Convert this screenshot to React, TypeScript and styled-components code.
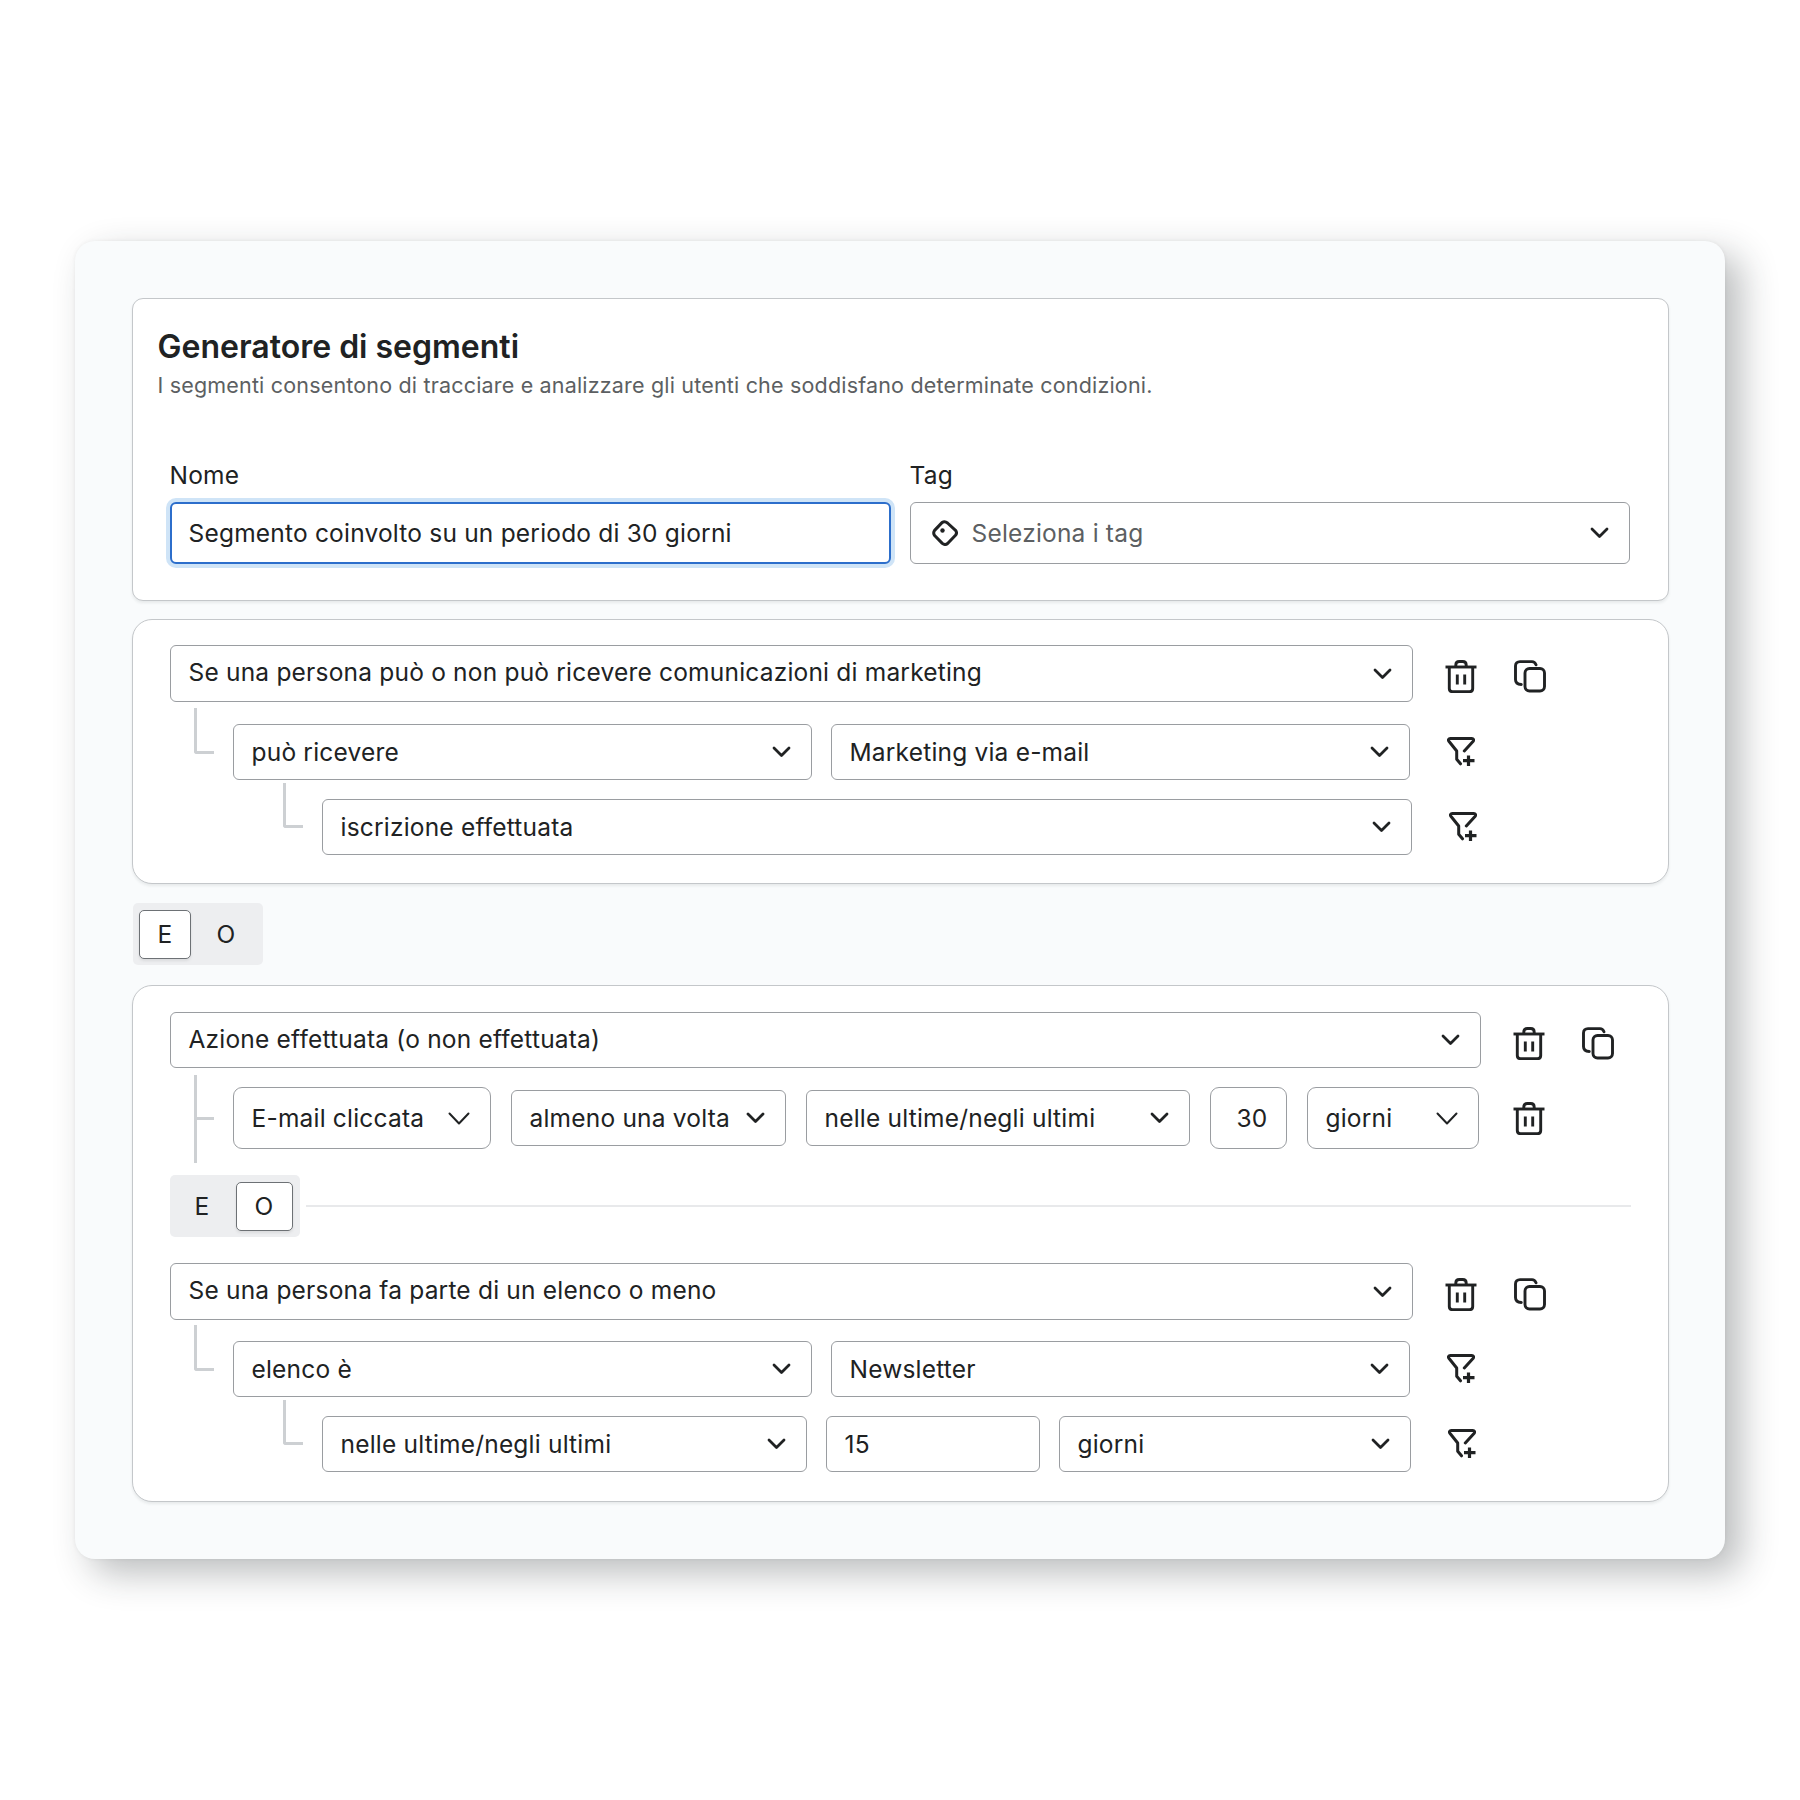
import React from "react";
import styled, { createGlobalStyle } from "styled-components";

const Global = createGlobalStyle`
  html, body { margin: 0; padding: 0; background: #fff; }
  body { font-family: Inter, "Noto Sans", sans-serif; color: #202223; letter-spacing: 0.2px; }
  * { box-sizing: border-box; }
`;

const Page = styled.main`
  width: 1800px;
  height: 1800px;
  padding: 241px 75px 0;
  background: #fff;
`;

const Shell = styled.div`
  width: 1650px;
  height: 1318px;
  padding: 57px 56.5px;
  background: #f9fbfc;
  border-radius: 20px;
  display: flex;
  flex-direction: column;
  box-shadow: 16px 14px 36px rgba(30, 35, 40, 0.3), 0 0 4px rgba(30, 35, 40, 0.06);
`;

const Card = styled.section<{ $h: number; $r?: number; $pt?: number; $mt?: number }>`
  height: ${(p) => p.$h}px;
  margin-top: ${(p) => p.$mt ?? 0}px;
  flex-shrink: 0;
  background: #fff;
  border: 1.5px solid #c4c7ca;
  border-radius: ${(p) => p.$r ?? 20}px;
  box-shadow: 0 2px 3px rgba(30, 35, 40, 0.08);
  padding: ${(p) => p.$pt ?? 25}px 37px 0;
  display: flex;
  flex-direction: column;
`;

const Header = styled.header`
  margin: 0 0 0 -12px;
`;

const Title = styled.h1`
  margin: 0;
  font-size: 32px;
  line-height: 36px;
  font-weight: 600;
  letter-spacing: 0;
  color: #202223;
`;

const Subtitle = styled.p`
  margin: 5px 0 0;
  font-size: 21.5px;
  line-height: 30px;
  letter-spacing: 0.18px;
  color: #5c5f62;
`;

const Fields = styled.div`
  margin-top: 60px;
  display: grid;
  grid-template-columns: 721px 720px;
  gap: 0 19px;
`;

const Field = styled.div`
  display: flex;
  flex-direction: column;
`;

const Label = styled.label`
  font-size: 24.5px;
  line-height: 30px;
  margin-bottom: 12px;
  color: #202223;
`;

const TextInput = styled.div`
  height: 62px;
  display: flex;
  align-items: center;
  padding: 0 17px;
  font-size: 24.5px;
  background: #fff;
  border: 2px solid #2c6ecb;
  border-radius: 6px;
  box-shadow: 0 0 0 4px #cfe4f7;
`;

const Box = styled.div<{ $w?: number; $h?: number; $r?: number; $inset?: number; $lift?: boolean }>`
  ${(p) => (p.$w ? `width: ${p.$w}px;` : "flex: 1;")}
  flex-shrink: 0;
  height: ${(p) => p.$h ?? 56}px;
  display: flex;
  align-items: center;
  justify-content: space-between;
  gap: 14px;
  padding: 0 19.5px ${(p) => (p.$lift ? 3 : 0)}px ${(p) => p.$inset ?? 18}px;
  font-size: 24.5px;
  color: #202223;
  background: #fff;
  border: 1.5px solid #9a9da1;
  border-radius: ${(p) => p.$r ?? 6}px;
  white-space: nowrap;
  ${(p) => (p.$lift ? "svg { margin-top: 3px; }" : "")}
`;

const Placeholder = styled.span`
  flex: 1;
  color: #5c5f62;
`;

const Row = styled.div<{ $indent?: number; $gap?: number; $top?: number }>`
  display: flex;
  align-items: center;
  gap: ${(p) => p.$gap ?? 19}px;
  margin-left: ${(p) => p.$indent ?? 0}px;
  margin-top: ${(p) => p.$top ?? 0}px;
  position: relative;
`;

const Connector = styled.span<{ $h: number; $tee?: boolean }>`
  position: absolute;
  left: -39px;
  top: ${(p) => (p.$tee ? -12 : -16)}px;
  width: 20px;
  height: ${(p) => p.$h}px;
  border-left: 3px solid #cdd0d3;
  ${(p) => (p.$tee ? "" : "border-bottom: 3px solid #cdd0d3; border-bottom-left-radius: 3px;")}
  &::after {
    content: "";
    display: ${(p) => (p.$tee ? "block" : "none")};
    position: absolute;
    left: 0;
    top: 42px;
    width: 17px;
    height: 3px;
    background: #cdd0d3;
  }
`;

const Actions = styled.div<{ $shift?: number; $gap?: number; $dy?: number }>`
  display: flex;
  align-items: center;
  gap: ${(p) => p.$gap ?? 37}px;
  margin-left: ${(p) => p.$shift ?? 13}px;
  margin-top: ${(p) => p.$dy ?? 0}px;
  flex-shrink: 0;
  color: #202223;
  svg { display: block; }
`;

const Toggle = styled.div<{ $mt?: number; $mb?: number; $ml?: number }>`
  width: 130px;
  height: 62px;
  flex-shrink: 0;
  margin: ${(p) => p.$mt ?? 0}px 0 ${(p) => p.$mb ?? 0}px ${(p) => p.$ml ?? 0}px;
  display: grid;
  grid-template-columns: 53px 69px;
  align-items: center;
  justify-items: center;
  background: #edeef0;
  border-radius: 5px;
  padding: 6px;
`;

const ToggleItem = styled.div<{ $on?: boolean; $w?: number; $nudge?: number }>`
  width: ${(p) => p.$w ?? 52}px;
  height: 49px;
  margin-left: ${(p) => p.$nudge ?? 0}px;
  display: flex;
  align-items: center;
  justify-content: center;
  font-size: 24.5px;
  border-radius: 5px;
  ${(p) =>
    p.$on
      ? "background: #fff; border: 1.5px solid #6d7175; box-shadow: 0 2px 3px rgba(0,0,0,.08);"
      : ""}
`;

const Divider = styled.div`
  flex: 1;
  height: 1.5px;
  background: #e8e9eb;
`;

const Thick = () => (
  <svg width="19" height="12" viewBox="0 0 19 12" fill="none" stroke="#202223" strokeWidth="2.8" strokeLinecap="round" strokeLinejoin="round">
    <path d="M2 2l7.500 7.500L17 2" />
  </svg>
);

const Thin = () => (
  <svg width="22" height="13" viewBox="0 0 22 13" fill="none" stroke="#202223" strokeWidth="2" strokeLinecap="round" strokeLinejoin="round">
    <path d="M1.500 1.500L11 11.500l9.500-10" />
  </svg>
);

const Trash = () => (
  <svg width="32" height="33" viewBox="0 0 32 33" fill="none" stroke="#202223" strokeWidth="2.9" strokeLinejoin="round">
    <path d="M.5 7h31" />
    <path d="M10.800 7V5c0-2.200 1.500-3.500 3.500-3.500h3.400c2 0 3.500 1.300 3.500 3.500v2" />
    <path d="M4.300 7v21.500c0 2 1.300 3.200 3.200 3.200h17c1.900 0 3.200-1.200 3.200-3.200V7" />
    <path d="M12.300 14.500v10M19.700 14.500v10" />
  </svg>
);

const Copy = () => (
  <svg width="32" height="33" viewBox="0 0 32 33" fill="none" stroke="#202223" strokeWidth="2.9" strokeLinecap="round" strokeLinejoin="round">
    <rect x="11" y="8.500" width="19.500" height="22.500" rx="4.500" />
    <path d="M22 4.800C21.200 2.800 19.800 1.600 18 1.600H6C3.200 1.600 1.500 3.300 1.500 6v13.500c0 2.800 2 4.800 5.800 5" />
  </svg>
);

const FilterPlus = () => (
  <svg width="28" height="30" viewBox="0 0 28 30" fill="none" stroke="#202223" strokeWidth="3" strokeLinecap="round" strokeLinejoin="round">
    <path d="M17.300 14l8.900-9.800c1-1.400.3-2.700-1.400-2.700H3.300C1.600 1.500.9 2.800 1.900 4.200L9.700 14v8.300l3.800 4.500" />
    <path d="M21.500 18.500v10.500M16 23.700h11.500" strokeLinecap="butt" strokeWidth="3.200" />
  </svg>
);

const TagShape = styled.svg`
  margin-left: 3px;
  flex-shrink: 0;
`;

const Tag = () => (
  <TagShape width="26" height="26" viewBox="0 0 26 26" fill="none" stroke="#202223" strokeWidth="3" strokeLinejoin="round">
    <path d="M10 2.600Q12.800.9 15.500 3l8 7.300q2 2.500 0 5l-7.900 8.200q-2.600 2-5.300-.1l-7.700-7.900q-1.800-2.500 0-5.100z" />
    <circle cx="10.500" cy="10.500" r="2.200" fill="#202223" stroke="none" />
  </TagShape>
);

const App = () => (
  <>
    <Global />
    <Page>
      <Shell>
        <Card $h={303} $r={11} $pt={30}>
          <Header>
            <Title>Generatore di segmenti</Title>
            <Subtitle>I segmenti consentono di tracciare e analizzare gli utenti che soddisfano determinate condizioni.</Subtitle>
          </Header>
          <Fields>
            <Field>
              <Label>Nome</Label>
              <TextInput>Segmento coinvolto su un periodo di 30 giorni</TextInput>
            </Field>
            <Field>
              <Label>Tag</Label>
              <Box $h={62}>
                <Tag />
                <Placeholder>Seleziona i tag</Placeholder>
                <Thick />
              </Box>
            </Field>
          </Fields>
        </Card>

        <Card $h={265} $mt={18}>
          <Row>
            <Box $w={1243} $h={57} $lift>
              Se una persona può o non può ricevere comunicazioni di marketing
              <Thick />
            </Box>
            <Actions $dy={5}>
              <Trash />
              <Copy />
            </Actions>
          </Row>
          <Row $indent={63} $top={22}>
            <Connector $h={46} />
            <Box $w={579}>
              può ricevere
              <Thick />
            </Box>
            <Box $w={579}>
              Marketing via e-mail
              <Thick />
            </Box>
            <Actions $shift={18}>
              <FilterPlus />
            </Actions>
          </Row>
          <Row $indent={152} $top={19}>
            <Connector $h={45} />
            <Box $w={1090}>
              iscrizione effettuata
              <Thick />
            </Box>
            <Actions $shift={18}>
              <FilterPlus />
            </Actions>
          </Row>
        </Card>

        <Toggle $mt={19} $mb={20} $ml={1}>
          <ToggleItem $on>E</ToggleItem>
          <ToggleItem>O</ToggleItem>
        </Toggle>

        <Card $h={517} $pt={26}>
          <Row>
            <Box $w={1311} $h={56} $lift>
              Azione effettuata (o non effettuata)
              <Thick />
            </Box>
            <Actions $dy={7}>
              <Trash />
              <Copy />
            </Actions>
          </Row>
          <Row $indent={63} $top={19} $gap={20}>
            <Connector $h={88} $tee />
            <Box $w={258} $h={62} $r={9}>
              E-mail cliccata
              <Thin />
            </Box>
            <Box $w={275}>
              almeno una volta
              <Thick />
            </Box>
            <Box $w={384}>
              nelle ultime/negli ultimi
              <Thick />
            </Box>
            <Box $w={77} $h={62} $r={9} $inset={26}>
              30
            </Box>
            <Box $w={172} $h={62} $r={9}>
              giorni
              <Thin />
            </Box>
            <Actions $shift={14}>
              <Trash />
            </Actions>
          </Row>
          <Row $top={26} $gap={6}>
            <Toggle>
              <ToggleItem>E</ToggleItem>
              <ToggleItem $on $w={57} $nudge={2}>O</ToggleItem>
            </Toggle>
            <Divider />
          </Row>
          <Row $top={26}>
            <Box $w={1243} $h={57} $lift>
              Se una persona fa parte di un elenco o meno
              <Thick />
            </Box>
            <Actions $dy={5}>
              <Trash />
              <Copy />
            </Actions>
          </Row>
          <Row $indent={63} $top={21}>
            <Connector $h={46} />
            <Box $w={579}>
              elenco è
              <Thick />
            </Box>
            <Box $w={579}>
              Newsletter
              <Thick />
            </Box>
            <Actions $shift={18}>
              <FilterPlus />
            </Actions>
          </Row>
          <Row $indent={152} $top={19}>
            <Connector $h={45} />
            <Box $w={485}>
              nelle ultime/negli ultimi
              <Thick />
            </Box>
            <Box $w={214}>15</Box>
            <Box $w={352}>
              giorni
              <Thick />
            </Box>
            <Actions $shift={18}>
              <FilterPlus />
            </Actions>
          </Row>
        </Card>
      </Shell>
    </Page>
  </>
);

export default App;
